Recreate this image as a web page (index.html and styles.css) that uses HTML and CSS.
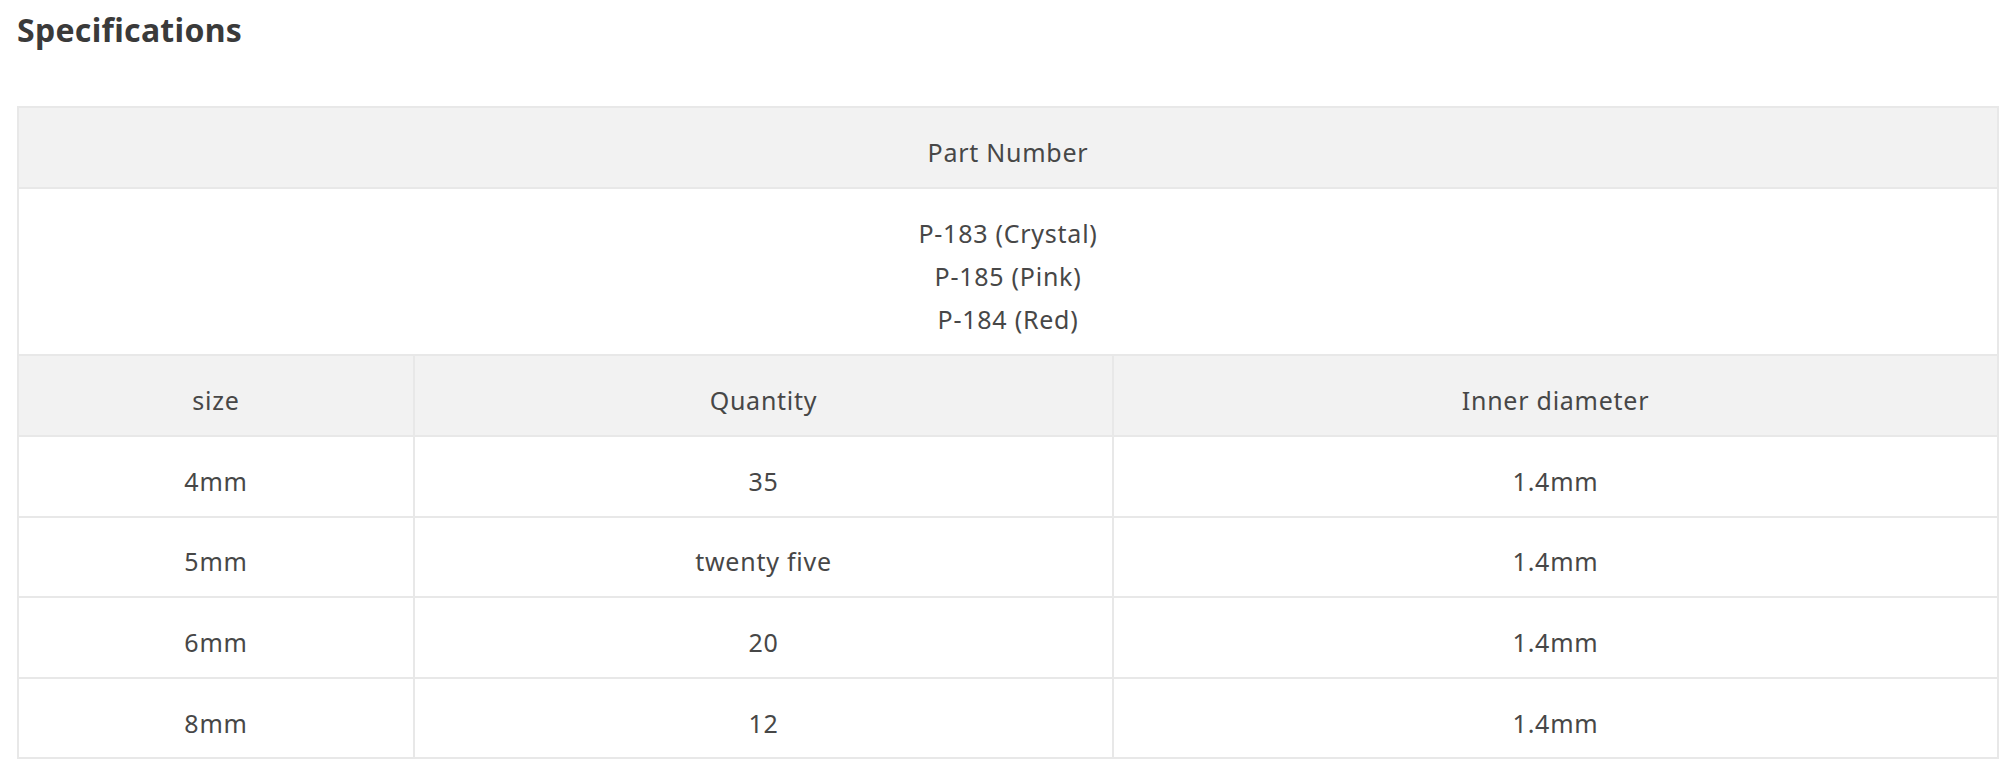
FILE: index.html
```html
<!DOCTYPE html>
<html lang="en">
<head>
<meta charset="utf-8">
<title>Specifications</title>
<link rel="stylesheet" href="styles.css">
</head>
<body>
<main class="page">
  <h2 class="title">Specifications</h2>
  <table class="spec">
    <colgroup>
      <col class="c1">
      <col class="c2">
      <col class="c3">
    </colgroup>
    <tr class="head">
      <td colspan="3">Part Number</td>
    </tr>
    <tr class="parts">
      <td colspan="3">P-183 (Crystal)<br>P-185 (Pink)<br>P-184 (Red)</td>
    </tr>
    <tr class="head">
      <td>size</td>
      <td>Quantity</td>
      <td>Inner diameter</td>
    </tr>
    <tr><td>4mm</td><td>35</td><td>1.4mm</td></tr>
    <tr><td>5mm</td><td>twenty five</td><td>1.4mm</td></tr>
    <tr><td>6mm</td><td>20</td><td>1.4mm</td></tr>
    <tr><td>8mm</td><td>12</td><td>1.4mm</td></tr>
  </table>
</main>
</body>
</html>
```
FILE: styles.css
```css
html, body {
  margin: 0;
  padding: 0;
  background: #ffffff;
}
.page {
  padding: 0 1px 0 17px;
  font-family: "Noto Sans", "Open Sans", sans-serif;
  color: #474747;
}
.title {
  margin: 0;
  padding-top: 10px;
  height: 106px;
  box-sizing: border-box;
  font-size: 32px;
  letter-spacing: 0.3px;
  font-weight: 700;
  line-height: 40px;
  color: #3a3a3a;
}
.spec {
  width: 1982px;
  border-collapse: collapse;
  table-layout: fixed;
  font-size: 25px;
  letter-spacing: 0.75px;
  color: #474747;
}
.c1 { width: 396px; }
.c2 { width: 699px; }
.c3 { width: auto; }
.spec td {
  box-sizing: border-box;
  border: 2px solid #e8e8e8;
  text-align: center;
  vertical-align: middle;
  height: 80.6px;
  padding: 10px 0 0;
  line-height: 43px;
}
.spec .head td {
  background: #f2f2f2;
  height: 81px;
}
.spec .parts td {
  height: 167px;
}
```
